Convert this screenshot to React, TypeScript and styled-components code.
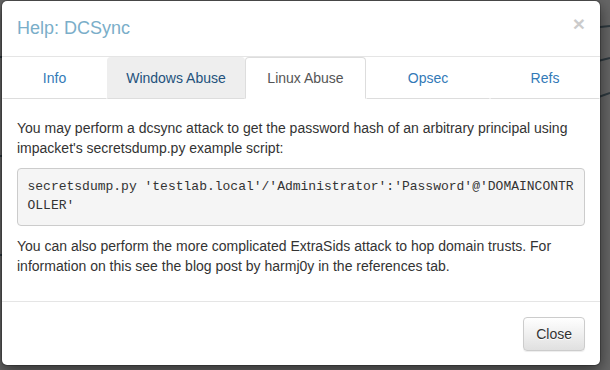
import {useState} from 'react';
import styled, {createGlobalStyle} from 'styled-components';

const GlobalStyle = createGlobalStyle`
  html, body {
    margin: 0;
    padding: 0;
    background: #676767;
    font-family: 'Liberation Sans', Arial, sans-serif;
    font-size: 14px;
    line-height: 20px;
    color: #333;
  }
  * { box-sizing: border-box; }
`;

const Screen = styled.div`
  position: relative;
  width: 610px;
  height: 370px;
  overflow: hidden;
  padding: 0 0 0 1px;
`;

const Backdrop = styled.svg`
  position: absolute;
  inset: 0;
  width: 610px;
  height: 370px;
`;

const Dialog = styled.div`
  position: relative;
  width: 600px;
  height: 366px;
  background: #fff;
  border: 1px solid rgba(0, 0, 0, 0.2);
  border-radius: 6px;
  background-clip: padding-box;
  box-shadow: 0 5px 15px rgba(0, 0, 0, 0.5);
  display: flex;
  flex-direction: column;
`;

const Header = styled.div`
  display: flex;
  align-items: flex-start;
  justify-content: space-between;
  padding: 15px 15px 14px;
  border-bottom: 1px solid #e5e5e5;
`;

const Title = styled.h4`
  margin: 0;
  font-size: 18px;
  font-weight: 500;
  line-height: 25.7px;
  color: #7aaec9;
`;

const CloseX = styled.button`
  margin-top: -3px;
  padding: 0;
  border: 0;
  background: transparent;
  font-family: 'Liberation Sans', Arial, sans-serif;
  font-size: 21px;
  font-weight: bold;
  line-height: 1;
  color: #000;
  opacity: 0.2;
  text-shadow: 0 1px 0 #fff;
  cursor: pointer;
`;

const Tabs = styled.ul`
  list-style: none;
  margin: 0;
  padding: 0;
  display: grid;
  grid-template-columns: 105px 138px 121px 124px 1fr;
`;

type TabState = 'idle' | 'hover' | 'active';

const TabLink = styled.a<{$state: TabState}>`
  display: block;
  height: 42px;
  padding: 10px 15px;
  text-align: center;
  line-height: 20px;
  text-decoration: none;
  cursor: pointer;
  border: 1px solid ${p => (p.$state === 'active' ? '#ddd' : 'transparent')};
  border-bottom-color: ${p => (p.$state === 'active' ? '#fff' : '#ddd')};
  border-radius: 4px 4px 0 0;
  background: ${p => (p.$state === 'hover' ? '#eee' : '#fff')};
  color: ${p =>
    p.$state === 'active' ? '#555' : p.$state === 'hover' ? '#23527c' : '#337ab7'};
`;

const Body = styled.div`
  flex: 1;
  padding: 19px 15px 15px;
`;

const Para = styled.p`
  margin: 0 0 10px;
`;

const Code = styled.pre`
  margin: 0 0 10px;
  padding: 9.5px;
  font-family: 'Liberation Mono', 'Courier New', monospace;
  font-size: 13px;
  line-height: 18.57px;
  color: #333;
  background: #f5f5f5;
  border: 1px solid #ccc;
  border-radius: 4px;
  white-space: pre-wrap;
  word-break: break-all;
`;

const Footer = styled.div`
  display: flex;
  justify-content: flex-end;
  padding: 15px;
  border-top: 1px solid #e5e5e5;
`;

const Button = styled.button`
  height: 34px;
  padding: 6px 12px;
  font-family: 'Liberation Sans', Arial, sans-serif;
  font-size: 14px;
  line-height: 20px;
  color: #333;
  background: linear-gradient(to bottom, #fff 0, #e0e0e0 100%);
  border: 1px solid #ccc;
  border-radius: 4px;
  text-shadow: 0 1px 0 #fff;
  box-shadow: inset 0 1px 0 rgba(255, 255, 255, 0.15), 0 1px 1px rgba(0, 0, 0, 0.075);
  cursor: pointer;
`;

const tabs = ['Info', 'Windows Abuse', 'Linux Abuse', 'Opsec', 'Refs'];

export default function App() {
  const [active, setActive] = useState('Linux Abuse');
  const hover = 'Windows Abuse';

  return (
    <>
      <GlobalStyle />
      <Screen>
        <Backdrop viewBox='0 0 610 370'>
          <g stroke='#2f3a40' strokeWidth='2'>
            <line x1='590' y1='28' x2='610' y2='26' />
            <line x1='590' y1='63' x2='610' y2='58' />
            <line x1='590' y1='100' x2='610' y2='93' />
            <line x1='0' y1='57' x2='3' y2='57' />
            <line x1='0' y1='156' x2='3' y2='156' />
            <line x1='0' y1='255' x2='3' y2='255' />
          </g>
        </Backdrop>
        <Dialog>
          <Header>
            <Title>Help: DCSync</Title>
            <CloseX aria-label='Close'>×</CloseX>
          </Header>
          <Tabs>
            {tabs.map(t => (
              <li key={t}>
                <TabLink
                  $state={t === active ? 'active' : t === hover ? 'hover' : 'idle'}
                  onClick={() => setActive(t)}
                >
                  {t}
                </TabLink>
              </li>
            ))}
          </Tabs>
          <Body>
            <Para>
              You may perform a dcsync attack to get the password hash of an arbitrary principal using
              impacket's secretsdump.py example script:
            </Para>
            <Code>secretsdump.py 'testlab.local'/'Administrator':'Password'@'DOMAINCONTROLLER'</Code>
            <Para>
              You can also perform the more complicated ExtraSids attack to hop domain trusts. For
              information on this see the blog post by harmj0y in the references tab.
            </Para>
          </Body>
          <Footer>
            <Button>Close</Button>
          </Footer>
        </Dialog>
      </Screen>
    </>
  );
}
